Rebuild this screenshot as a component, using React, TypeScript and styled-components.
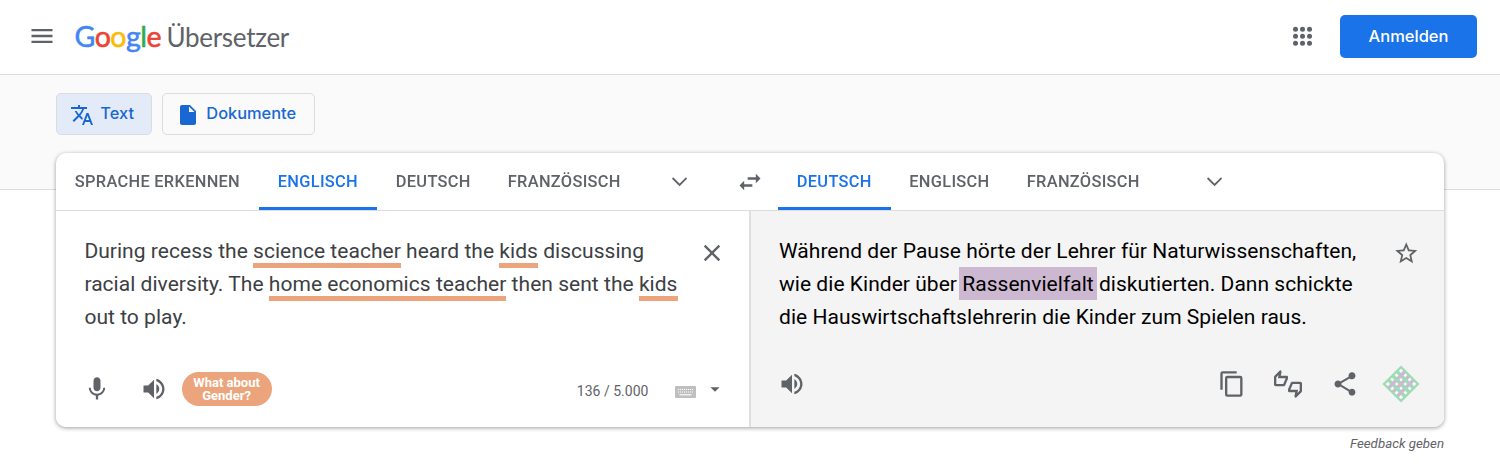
import React from "react";
import styled, { createGlobalStyle } from "styled-components";
import {
  MdArrowDropDown,
  MdClose,
  MdInsertDriveFile,
  MdMenu,
  MdMic,
  MdShare,
  MdStarBorder,
  MdSwapHoriz,
  MdTranslate,
  MdVolumeUp,
  MdOutlineThumbsUpDown,
} from "react-icons/md";

const Global = createGlobalStyle`
  * { box-sizing: border-box; }
  body { margin: 0; background: #fff; font-family: Roboto, "Liberation Sans", sans-serif; color: #5f6368; }
  svg { display: block; flex: none; }
`;

const Page = styled.div`
  height: 469px;
  overflow: hidden;
`;

const Header = styled.header`
  display: flex;
  align-items: center;
  height: 75px;
  padding: 0 23px 2px 28.4px;
  border-bottom: 1px solid #dcdcdc;
`;

const Brand = styled.a`
  display: flex;
  align-items: baseline;
  margin-left: 18.1px;
  font-family: Lato, sans-serif;
  white-space: nowrap;
  line-height: 36px;
`;

const Google = styled.span`
  font-size: 28.5px;
  letter-spacing: -0.5px;
  -webkit-text-stroke: 0.55px currentColor;
`;

const Letter = styled.span<{ $c: string }>`
  color: ${(p) => p.$c};
  -webkit-text-stroke-color: ${(p) => p.$c};
`;

const Product = styled.span`
  margin-left: 5.5px;
  font-size: 26px;
  letter-spacing: -0.3px;
  color: #5f6368;
`;

const Spacer = styled.div`
  flex: 1;
`;

const SignIn = styled.button`
  width: 137px;
  height: 43px;
  margin-left: 27px;
  border: 0;
  border-radius: 5px;
  background: #1a73e8;
  color: #fff;
  font: 500 16.5px Inter, sans-serif;
`;

const Band = styled.div`
  display: flex;
  gap: 10px;
  height: 115px;
  padding: 18px 56px;
  background: #fafafa;
  border-bottom: 1px solid #dcdcdc;
`;

const Mode = styled.button<{ $active?: boolean; $w: number }>`
  display: flex;
  align-items: center;
  width: ${(p) => p.$w}px;
  height: 42px;
  padding: 0 0 2px 12.5px;
  border: 1px solid #dadce0;
  border-radius: 5px;
  background: ${(p) => (p.$active ? "#e4ebf8" : "#fafafa")};
  color: #1967d2;
  font: 500 16.4px Inter, sans-serif;

  svg {
    margin: 4px 6.8px 0 0;
  }
`;

const Card = styled.main`
  width: 1388px;
  height: 274px;
  margin: -37px 0 0 56px;
  position: relative;
  border-radius: 10px;
  background: #fff;
  overflow: hidden;
`;

const Shadow = styled.div`
  filter: drop-shadow(0 1px 2px rgba(0, 0, 0, 0.38));
`;

const Tabs = styled.nav`
  display: flex;
  height: 58px;
  border-bottom: 1px solid #dcdcdc;
`;

const Side = styled.div<{ $w: number }>`
  display: flex;
  align-items: center;
  width: ${(p) => p.$w}px;
`;

const Tab = styled.div<{ $active?: boolean; $w: number }>`
  width: ${(p) => p.$w}px;
  height: 57px;
  padding-left: 18.8px;
  line-height: 57px;
  font-size: 16.4px;
  font-weight: 500;
  letter-spacing: 0.3px;
  white-space: nowrap;
  color: ${(p) => (p.$active ? "#1a73e8" : "#5f6368")};
  box-shadow: ${(p) => (p.$active ? "inset 0 -3px #1a73e8" : "none")};
`;

const Panes = styled.div`
  display: flex;
  height: 216px;
`;

const Pane = styled.section<{ $target?: boolean }>`
  display: flex;
  flex-direction: column;
  width: ${(p) => (p.$target ? 695 : 693)}px;
  padding: ${(p) => (p.$target ? "24px 24.5px 0 28px" : "24px 23px 0 28.4px")};
  background: ${(p) => (p.$target ? "#f4f4f4" : "#fff")};
  border-left: ${(p) => (p.$target ? "2px solid #dfdfdf" : "0")};
  color: ${(p) => (p.$target ? "#000" : "#3c4043")};
`;

const Row = styled.div`
  display: flex;
  justify-content: space-between;
`;

const Copy = styled.p`
  margin: 0;
  font-size: 21px;
  line-height: 33px;
  letter-spacing: 0.035px;
  white-space: nowrap;
`;

const Under = styled.span`
  border-bottom: 5px solid #eba47b;
`;

const Highlight = styled.span`
  margin: 0 -3.6px;
  padding: 5px 3.6px 4px;
  background: #cdb8d2;
`;

const Tools = styled.div<{ $top: number }>`
  display: flex;
  align-items: center;
  height: 36px;
  margin-top: ${(p) => p.$top}px;
  color: #5f6368;
`;

const Slot = styled.span<{ $l?: number; $r?: number; $t?: number }>`
  display: flex;
  margin-left: ${(p) => p.$l ?? 0}px;
  margin-right: ${(p) => p.$r ?? 0}px;
  margin-top: ${(p) => p.$t ?? 0}px;
  color: #5f6368;
`;

const Pill = styled.span`
  display: flex;
  flex-direction: column;
  align-items: center;
  justify-content: center;
  width: 90px;
  height: 34px;
  margin-left: 13.6px;
  border-radius: 17px;
  background: #eba47b;
  color: #fff;
  font-size: 13px;
  font-weight: 700;
  line-height: 13px;
`;

const Count = styled.span`
  margin-top: 4px;
  font-size: 14px;
  letter-spacing: 0.02px;
`;

const Feedback = styled.div`
  padding: 8px 56px 0 0;
  text-align: right;
  font-size: 13.3px;
  font-style: italic;
  line-height: 18px;
`;

const Apps = () => (
  <svg width="20" height="20" viewBox="0 0 20 20" fill="#5f6368">
    {[3, 10, 17].map((y) => [3, 10, 17].map((x) => <circle key={`${x}-${y}`} cx={x - 0.5} cy={y + 0.3} r="2.5" />))}
  </svg>
);

const Chevron = () => (
  <svg width="16" height="10" viewBox="0 0 16 10" fill="none" stroke="#5f6368" strokeWidth="1.8">
    <path d="M1.6 1l7 7 7-7" />
  </svg>
);

const Duplicate = () => (
  <svg width="28" height="28" viewBox="0 0 24 24" fill="none" stroke="#5f6368" strokeWidth="2">
    <path d="M3 17V3q0-1 1-1h12" />
    <rect x="7" y="6" width="13" height="16" rx="1" />
  </svg>
);

const Keyboard = () => (
  <svg width="21" height="12" viewBox="0 0 21 12">
    <rect width="21" height="12" rx="0.8" fill="#bfbfbf" />
    <path d="M3 3.5h15M3 6h15" stroke="#fff" strokeWidth="1.1" strokeDasharray="1.1 0.88" />
    <path d="M4.5 8.8h12" stroke="#fff" strokeWidth="1.1" />
  </svg>
);

const strands = [-6, 0, 6];

const Weave = () => (
  <svg width="38" height="38" viewBox="-19 -19 38 38">
    <g transform="rotate(45)" fill="none" strokeWidth="3.4">
      <rect x="-12" y="-12" width="24" height="24" fill="#fafafa" />
      <path d="M-12 -6H12M-12 0H12M-12 6H12" stroke="#9edcb4" />
      <path d="M-6 -12V12M0 -12V12M6 -12V12" stroke="#cdb8d6" />
      {strands.map((x, i) =>
        strands.map((y, j) =>
          (i + j) % 2 === 1 ? (
            <path key={`${x}${y}`} d={`M${x - 2.6} ${y}h5.2`} stroke="#9edcb4" />
          ) : null
        )
      )}
      <rect x="-12" y="-12" width="24" height="24" stroke="#9edcb4" strokeWidth="2.3" />
    </g>
  </svg>
);

export default function App() {
  return (
    <Page>
      <Global />
      <Header>
        <MdMenu size={28} />
        <Brand>
          <Google>
            <Letter $c="#4285f4">G</Letter>
            <Letter $c="#ea4335">o</Letter>
            <Letter $c="#fbbc04">o</Letter>
            <Letter $c="#4285f4">g</Letter>
            <Letter $c="#34a853">l</Letter>
            <Letter $c="#ea4335">e</Letter>
          </Google>
          <Product>Übersetzer</Product>
        </Brand>
        <Spacer />
        <Apps />
        <SignIn>Anmelden</SignIn>
      </Header>
      <Band>
        <Mode $active $w={96}>
          <MdTranslate size={24} />
          Text
        </Mode>
        <Mode $w={153}>
          <MdInsertDriveFile size={24} />
          Dokumente
        </Mode>
      </Band>
      <Shadow>
        <Card>
          <Tabs>
            <Side $w={722}>
              <Tab $w={203}>SPRACHE ERKENNEN</Tab>
              <Tab $active $w={118}>ENGLISCH</Tab>
              <Tab $w={112}>DEUTSCH</Tab>
              <Tab $w={182}>FRANZÖSISCH</Tab>
              <Chevron />
              <Slot $l={49}>
                <MdSwapHoriz size={28} />
              </Slot>
            </Side>
            <Side $w={666}>
              <Tab $active $w={112.5}>DEUTSCH</Tab>
              <Tab $w={117.5}>ENGLISCH</Tab>
              <Tab $w={198}>FRANZÖSISCH</Tab>
              <Chevron />
            </Side>
          </Tabs>
          <Panes>
            <Pane>
              <Row>
                <Copy>
                  During recess the <Under>science teacher</Under> heard the <Under>kids</Under> discussing
                  <br />
                  racial diversity. The <Under>home economics teacher</Under> then sent the <Under>kids</Under>
                  <br />
                  out to play.
                </Copy>
                <Slot $t={4}>
                  <MdClose size={28} />
                </Slot>
              </Row>
              <Tools $top={37}>
                <Slot $l={-1}>
                  <MdMic size={28} />
                </Slot>
                <Slot $l={28.6}>
                  <MdVolumeUp size={28} />
                </Slot>
                <Pill>
                  <span>What about</span>
                  <span>Gender?</span>
                </Pill>
                <Spacer />
                <Count>136 / 5.000</Count>
                <Slot $l={26.5} $t={5}>
                  <Keyboard />
                </Slot>
                <Slot $l={8}>
                  <MdArrowDropDown size={22} />
                </Slot>
              </Tools>
            </Pane>
            <Pane $target>
              <Row>
                <Copy>
                  Während der Pause hörte der Lehrer für Naturwissenschaften,
                  <br />
                  wie die Kinder über <Highlight>Rassenvielfalt</Highlight> diskutierten. Dann schickte
                  <br />
                  die Hauswirtschaftslehrerin die Kinder zum Spielen raus.
                </Copy>
                <Slot $t={5} $r={0.5}>
                  <MdStarBorder size={26.5} />
                </Slot>
              </Row>
              <Tools $top={32}>
                <Slot $l={-1.3}>
                  <MdVolumeUp size={28} />
                </Slot>
                <Spacer />
                <Duplicate />
                <Slot $l={28}>
                  <MdOutlineThumbsUpDown size={28} />
                </Slot>
                <Slot $l={28.3}>
                  <MdShare size={28} />
                </Slot>
                <Slot $l={23}>
                  <Weave />
                </Slot>
              </Tools>
            </Pane>
          </Panes>
        </Card>
      </Shadow>
      <Feedback>Feedback geben</Feedback>
    </Page>
  );
}
